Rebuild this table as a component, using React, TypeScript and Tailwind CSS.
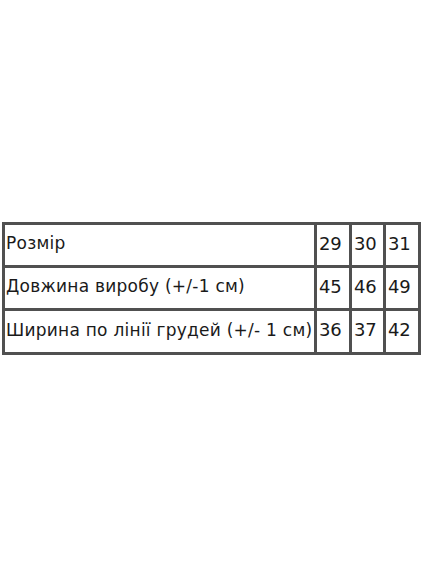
import React from "react";

const rows = [
  ["Розмір", "29", "30", "31"],
  ["Довжина виробу (+/-1 см)", "45", "46", "49"],
  ["Ширина по лінії грудей (+/- 1 см)", "36", "37", "42"],
];

export default function App() {
  return (
    <div className="w-[428px] h-[570px] bg-white pt-[222px] pl-[2px]" style={{ fontFamily: '"DejaVu Sans", sans-serif' }}>
      <div className="w-[419px] grid grid-cols-[309px_32px_31px_32px] grid-rows-[40px_40px_41px] gap-[3px] p-[3px] bg-[#505050]">
        {rows.map((r, i) =>
          r.map((c, j) => (
            <div
              key={`${i}-${j}`}
              className={`bg-white flex items-center leading-none text-[#1a1a1a] whitespace-nowrap pb-[3px] ${j === 0 ? "pl-[1px] text-[17px] tracking-[0.25px]" : "pl-[2px] text-[18px] tracking-[-0.3px]"}`}
            >
              {c}
            </div>
          ))
        )}
      </div>
    </div>
  );
}
